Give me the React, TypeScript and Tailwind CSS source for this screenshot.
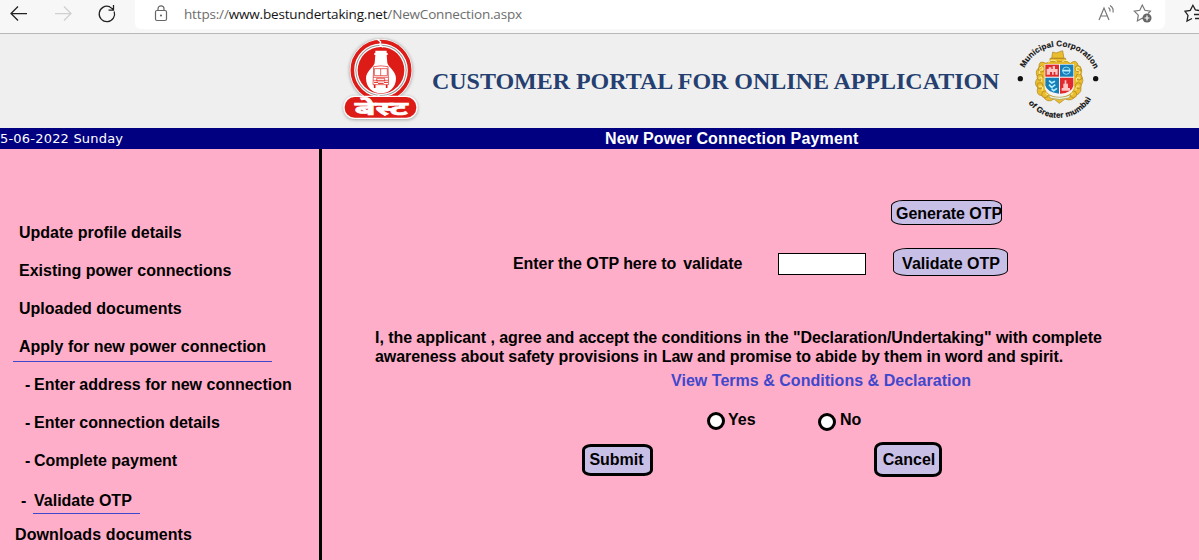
import React from "react";

const bestLogo = (
  <svg width="95" height="94" viewBox="0 6 285 282" className="shrink-0">
    <defs>
      <filter id="soft" x="-20%" y="-20%" width="140%" height="140%">
        <feGaussianBlur stdDeviation="5" />
      </filter>
    </defs>
    <g filter="url(#soft)" fill="#8f8f8f" opacity="0.65">
      <circle cx="138" cy="116" r="96" />
      <rect x="25" y="193" width="224" height="72" rx="34" />
    </g>
    <circle cx="138" cy="115" r="94" fill="#fff" />
    <circle cx="138" cy="115" r="86" fill="none" stroke="#dd1b17" strokeWidth="11" />
    <circle cx="138" cy="115" r="77" fill="#999" />
    <circle cx="138" cy="115" r="74" fill="#fff" />
    <circle cx="138" cy="115" r="70" fill="#dd1b17" />
    <path d="M127 22l10 8-3 8 10 8M128 190l10 5-2 6 10 5" fill="none" stroke="#fff" strokeWidth="4" />
    <path d="M121 56h34v7h3v6h-3l2 24c3 13 26 24 26 46 0 27-20 45-45 45s-45-18-45-45c0-22 23-33 26-46l2-24h-3v-6h3z" fill="#fff" />
    <g fill="none" stroke="#dd1b17" strokeWidth="2">
      <path d="M116 104q22-5 43 0l2 54h-47zM118 110h39v21h-39zM137 110v21M115 136h45M115 145h45M125 139h24v8h-24z" />
      <path d="M117 151h12M147 151h12M129 154h17" strokeWidth="3" />
      <path d="M119 158v10M155 158v10" strokeWidth="5" />
    </g>
    <rect x="25" y="191" width="223" height="70" rx="34" fill="#fff" />
    <rect x="29" y="195" width="215" height="62" rx="30" fill="#dd1b17" />
    <text x="139" y="248" textAnchor="middle" textLength="160" lengthAdjust="spacingAndGlyphs" fill="#fff" stroke="#fff" strokeWidth="2" className="font-['Noto_Sans_Devanagari','Noto_Sans',sans-serif] text-[58px] font-bold">बेस्ट</text>
  </svg>
);

const cityCrest = (
  <svg width="95" height="94" viewBox="0 6 285 282" className="shrink-0">
    <defs>
      <path id="arcTop" d="M43 108A116 116 0 0 1 254 114" />
      <path id="arcBottom" d="M55 214A114 114 0 0 0 246 196" />
    </defs>
    <g fill="#e9bd2d" stroke="#aa8220" strokeWidth="2">
      <path d="M108 94Q85 82 87 107Q72 119 84 137Q69 153 83 167Q76 190 99 192Q111 216 132 201L148 214L165 201Q188 210 198 190Q219 181 211 162Q226 145 212 130Q221 111 205 102Q200 79 181 94Q148 68 108 94Z" />
      <path d="M125 79l3-19 10 3 20-7 4 23zM120 79h47v10h-47z" />
      <circle cx="94" cy="111" r="9" /><circle cx="90" cy="136" r="9" />
      <circle cx="90" cy="161" r="9" /><circle cx="105" cy="187" r="10" />
      <circle cx="204" cy="110" r="9" /><circle cx="207" cy="135" r="9" />
      <circle cx="205" cy="161" r="9" /><circle cx="190" cy="187" r="10" />
    </g>
    <g fill="none" stroke="#fff0a0" strokeWidth="3">
      <path d="M89 109q10-12 10 4q-15 0-9 13M86 139q15-9 8 10M87 163q15-4 9 13M209 109q-11-10-10 6q15 0 8 12M210 139q-15-8-9 10M208 163q-12-6-10 12M107 185q13 5 18 12M189 185q-13 4-18 12M114 91q16-12 26-2M157 89q16-9 25 4" />
    </g>
    <path d="M104 96h88v67q0 20-25 29l-19 7-20-7q-24-8-24-29z" fill="#f4f4f4" />
    <path d="M106 98h41v36h-41z" fill="#df292d" />
    <path d="M150 98h40v36h-40z" fill="#167fb7" />
    <path d="M106 137h41v48q-38-5-41-25z" fill="#167fb7" />
    <path d="M150 137h40v24q-4 21-40 24z" fill="#df292d" />
    <path d="M110 128v-17h6v-5h8v5h4v-9h7v9h8v17h-7v-8h-5v8h-5v-8h-6v8zM155 176v-8h5v-13h4v-10h5v10h5v13h6v8z" fill="#ffc5c2" />
    <circle cx="169" cy="116" r="11" fill="none" stroke="#8edcff" strokeWidth="3" />
    <path d="M157 116h24M117 146l8 7 10-5M117 158l8 8 11-8M125 171l6 5 10-7" fill="none" stroke="#b3edff" strokeWidth="5" />
    <path d="M115 189q34 14 68-1l-6 10q-28 9-57 0z" fill="#e8f6e8" stroke="#ad8b36" strokeWidth="2" />
    <g fill="#111" className="font-['Liberation_Sans',sans-serif] text-[24px]">
      <text textLength="262" stroke="#111" strokeWidth=".5"><textPath href="#arcTop">Municipal Corporation</textPath></text>
      <text textLength="222" stroke="#111" strokeWidth=".5"><textPath href="#arcBottom">of Greater mumbai</textPath></text>
      <circle cx="31" cy="140" r="8" /><circle cx="257" cy="140" r="8" />
    </g>
  </svg>
);

const menu = ["Update profile details", "Existing power connections", "Uploaded documents"];
const steps = ["Enter address for new connection", "Enter connection details", "Complete payment"];

export default function App() {
  return (
    <div className="flex h-[560px] w-[1199px] flex-col overflow-hidden bg-[#ffaec9] font-['Liberation_Sans',Arial,sans-serif] text-[16px] leading-[19px] font-bold text-black">
      <nav className="flex h-[34px] shrink-0 border-b border-[#b8b8b8] bg-[#f7f7f7] font-normal">
        <svg width="135" height="30" viewBox="0 0 135 30" fill="none" stroke="#222" strokeWidth="1.25">
          <path d="M27 13.5H11M18 6.5l-7 7 7 7" />
          <path d="M55 13.5h16M64 6.5l7 7-7 7" stroke="#d0d0d0" />
          <path d="M114.200 11.500A7.700 7.700 0 1 1 109.500 6.700L113.500 9.500M113.500 5v5h-5" />
        </svg>
        <div className="flex h-[29px] w-[1030px] items-center rounded-b-md bg-white">
          <svg width="49" height="29" viewBox="135 0 49 29" fill="none" stroke="#666" strokeWidth="1.2">
            <rect x="155.5" y="10.5" width="11" height="10" rx="1.5" /><path d="M158 10V8.8a3 3 0 0 1 6 0V10" /><circle cx="161" cy="15.5" r=".5" fill="#666" />
          </svg>
          <span className="w-[910px] whitespace-nowrap font-['Open_Sans','Noto_Sans',sans-serif] text-[13.5px] tracking-[-0.17px] text-[#6d6d6d]">https://<span className="text-[#151515]">www.bestundertaking.net</span>/NewConnection.aspx</span>
          <svg width="71" height="29" viewBox="1094 0 71 29" fill="none" stroke="#777" strokeWidth="1.2">
            <path d="M1099 20l5-12 5 12M1101 16h6M1108.5 7.5q2 1.5 1.5 4M1110 5.5q4 2.5 3 7" />
            <path d="M1146 20l-3.8-1.8-4.8 2.7.9-5.7-4-4 5.5-.9 2.5-5.2 2.6 5.2 5.5.9-2.3 2.3" />
            <circle cx="1147" cy="18" r="4.5" fill="#666" stroke="none" /><path d="M1147 15.5v5M1144.500 18h5" stroke="#fff" />
          </svg>
        </div>
        <svg width="34" height="30" viewBox="1165 0 34 30" fill="none" stroke="#222" strokeWidth="1.3">
          <path d="M1192 18.5l-5 2.5 1-5.7-3-4 5.300-.9 2.600-5.100 2.500 4.600 3.600.6M1194 14.500h6M1195 18.500h5" />
        </svg>
      </nav>
      <header className="flex h-[94px] shrink-0 items-center bg-[#efefef] pl-[335px]">
        {bestLogo}
        <h1 className="w-[580px] whitespace-nowrap pl-[2px] font-['Liberation_Serif',serif] text-[24px] leading-[30px] tracking-[-0.03px] text-[#243f70]">CUSTOMER PORTAL FOR ONLINE APPLICATION</h1>
        {cityCrest}
      </header>
      <div className="flex h-[21px] shrink-0 items-center bg-[#000080] text-white">
        <span className="w-[605px] font-['DejaVu_Sans',sans-serif] text-[13px] font-normal tracking-[0.2px]">5-06-2022 Sunday</span>
        <span className="tracking-[0.16px]">New Power Connection Payment</span>
      </div>
      <div className="flex min-h-0 grow">
        <aside className="flex w-[322px] shrink-0 flex-col border-r-[3px] border-black pt-[64px]">
          {menu.map((label) => <div key={label} className="flex h-[38px] items-center pl-[19px]">{label}</div>)}
          <div className="ml-[13px] flex h-[38px] w-[259px] flex-col pl-[6px] pt-[10px]"><span>Apply for new power connection</span><span className="-ml-[6px] mt-[5px] h-px shrink-0 bg-[#3f48cc]" /></div>
          {steps.map((label) => <div key={label} className="flex h-[38px] items-center pl-[25px]"><span className="w-[9px]">-</span>{label}</div>)}
          <div className="flex h-[34px] pl-[21px] pt-[12px]"><span className="w-[12px]">-</span><span className="h-[23px] w-[107px] shrink-0 border-b border-[#3f48cc] pl-px">Validate OTP</span></div>
          <div className="mt-[12px] pl-[15px] tracking-[0.1px]">Downloads documents</div>
        </aside>
        <main className="flex grow flex-col">
          <div className="flex pt-[51px] pl-[569px]"><button className="h-[25px] w-[111px] whitespace-nowrap rounded-[12px/6px] border border-black bg-[#c8bfe7] pt-[2px] pl-[4px] text-left tracking-[-0.05px]">Generate OTP</button></div>
          <div className="mt-[23px] flex h-[28px] items-center pl-[191px]">
            <label htmlFor="otp" className="w-[265px] whitespace-nowrap pt-[2px] tracking-[-0.05px]">Enter the OTP here to<span className="pl-[7px]">validate</span></label>
            <input id="otp" className="mt-[4px] h-[22px] w-[88px] border border-black bg-white" />
            <button className="ml-[27px] h-[28px] w-[115px] whitespace-nowrap rounded-[14px/6px] border border-black bg-[#c8bfe7] pt-[2px] pl-px">Validate OTP</button>
          </div>
          <p className="mt-[52px] whitespace-nowrap pl-[53px] tracking-[-0.06px]">I, the applicant , agree and accept the conditions in the "Declaration/Undertaking" with complete<br />awareness about safety provisions in Law and promise to abide by them in word and spirit.</p>
          <a className="mt-[5px] pl-[349px] tracking-[0.03px] text-[#3f48cc]">View Terms &amp; Conditions &amp; Declaration</a>
          <div className="mt-[20px] flex h-[22px] pl-[385px]">
            <label className="flex w-[111px]"><input type="radio" name="agree" className="mt-[2px] size-[18px] appearance-none rounded-full border-3 border-black bg-white" /><span className="pl-[3px]">Yes</span></label>
            <label className="flex"><input type="radio" name="agree" className="mt-[3px] size-[18px] appearance-none rounded-full border-3 border-black bg-white" /><span className="pl-[4px]">No</span></label>
          </div>
          <div className="mt-[10px] flex pl-[260px]">
            <button className="mt-[2px] h-[32px] w-[71px] rounded-[9px/6px] border-3 border-black bg-[#c8bfe7] pr-[2px] pb-[2px]">Submit</button>
            <button className="ml-[221px] h-[35px] w-[68px] rounded-[9px/7px] border-3 border-black bg-[#c8bfe7] pl-[2px]">Cancel</button>
          </div>
        </main>
      </div>
    </div>
  );
}
